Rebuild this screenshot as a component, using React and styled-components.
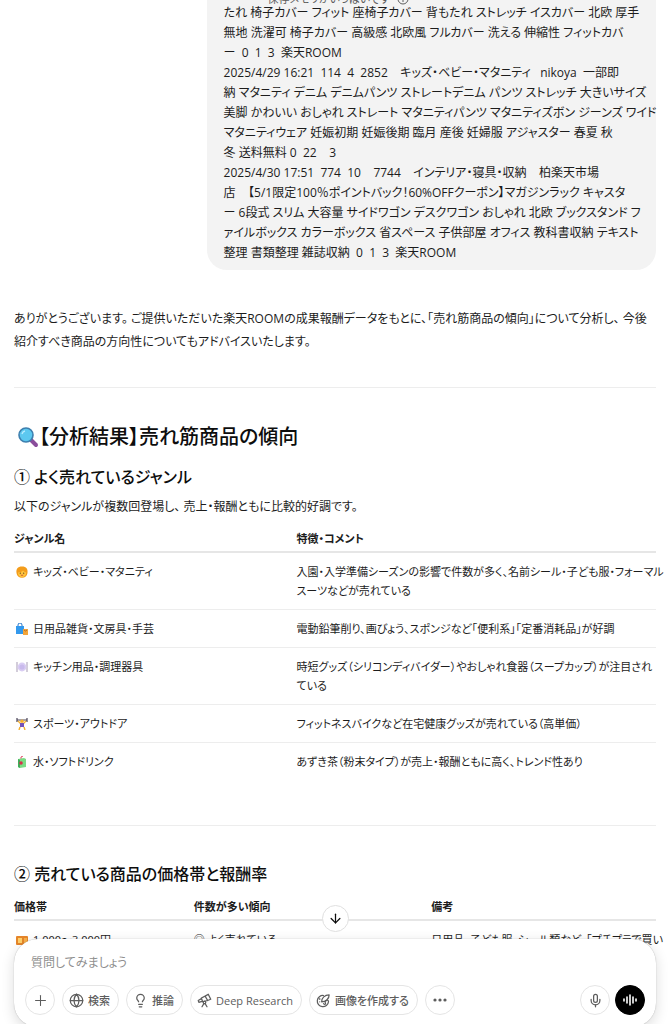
import styled, { createGlobalStyle, css } from "styled-components";
import { ArrowDown, Globe, Lightbulb, Mic, Plus } from "lucide-react";

const GlobalStyle = createGlobalStyle`
  * {
    box-sizing: border-box;
  }

  body {
    margin: 0;
    background: #fff;
    color: #1c1c1c;
    font-family: "Open Sans", "Noto Sans CJK JP", sans-serif;
    font-size: 12px;
    font-feature-settings: "palt";
  }

  button, input {
    font: inherit;
    font-feature-settings: inherit;
  }
`;

const Page = styled.div`
  position: relative;
  height: 100vh;
  overflow: hidden;
`;

const MemoryNotice = styled.div`
  position: absolute;
  top: -10px;
  left: 40%;
  display: flex;
  align-items: center;
  gap: 7px;
  font-size: 11px;
  line-height: 18px;
  color: #5d5d5d;
`;

const Thread = styled.main`
  padding: 0 13px 0 14px;
`;

const Bubble = styled.div`
  width: 70%;
  margin-left: auto;
  padding: 3px 0 7px 17px;
  border-radius: 0 0 20px 20px;
  background: #f3f3f3;
  line-height: 20px;
`;

const Line = styled.div`
  white-space: pre;
`;

const Reply = styled.article`
  padding-top: 37px;
`;

const Paragraph = styled.p`
  margin: 0;
  line-height: 23px;
`;

const Rule = styled.hr`
  margin: 34px 0;
  border: 0;
  border-top: 1px solid #ededed;
`;

const Title = styled.h2`
  display: flex;
  align-items: center;
  margin: 0;
  padding-left: 3px;
  font-size: 20px;
  font-weight: 500;
  line-height: 30px;
  color: #0d0d0d;
`;

const Subtitle = styled.h3`
  margin: 0;
  font-size: 16px;
  font-weight: 500;
  line-height: 28px;
  color: #0d0d0d;

  & + ${Paragraph} {
    margin-top: 4px;
  }
`;

const Table = styled.table`
  width: 100%;
  table-layout: fixed;
  border-collapse: separate;
  border-spacing: 0;
  font-size: 11px;
  line-height: 19px;
`;

const Th = styled.th`
  width: ${({ $width }) => $width};
  padding: 0 0 3px;
  border-bottom: 2px solid #e6e6e6;
  text-align: left;
  font-weight: 700;
`;

const Td = styled.td`
  padding: 9px 0;
  border-bottom: ${({ $last }) => ($last ? "0" : "1px solid #ededed")};
  vertical-align: top;
  white-space: nowrap;
`;

const Label = styled.span`
  display: flex;
  align-items: center;
  gap: 5px;
  padding-left: 2px;
`;

const Section = styled.section`
  padding-top: ${({ $gap }) => $gap};
`;

const Dock = styled.div`
  position: absolute;
  left: 14px;
  right: 13px;
  bottom: -3px;
  display: flex;
  flex-direction: column;
  align-items: center;
  gap: 7px;
`;

const ScrollButton = styled.button`
  display: grid;
  place-items: center;
  width: 27px;
  height: 27px;
  padding: 0;
  border: 1px solid #e0e0e0;
  border-radius: 50%;
  background: #fff;
  color: #0d0d0d;
`;

const Composer = styled.form`
  width: 100%;
  padding: 12px 11px;
  border-radius: 24px;
  background: #fff;
  box-shadow: 0 0 1px rgba(0, 0, 0, 0.35), 0 4px 14px rgba(0, 0, 0, 0.14);
`;

const Prompt = styled.input`
  display: block;
  width: 100%;
  height: 22px;
  margin-bottom: 12px;
  padding: 0 6px;
  border: 0;
  outline: 0;
  background: transparent;

  &::placeholder {
    color: #8f8f8f;
    opacity: 1;
  }
`;

const Actions = styled.div`
  display: flex;
  justify-content: space-between;
`;

const Group = styled.div`
  display: flex;
  gap: ${({ $gap }) => $gap};
`;

const round = css`
  width: 30px;
  padding: 0;
`;

const Pill = styled.button`
  display: flex;
  align-items: center;
  justify-content: center;
  gap: 4px;
  height: 30px;
  padding: 0 8px 0 6px;
  border: 1px solid ${({ $dark }) => ($dark ? "#000" : "#e5e5e5")};
  border-radius: 15px;
  background: ${({ $dark }) => ($dark ? "#000" : "#fff")};
  color: ${({ $dark }) => ($dark ? "#fff" : "#5d5d5d")};
  font-size: 11px;
  font-weight: 500;
  white-space: nowrap;
  ${({ $round }) => $round && round}
`;

const orderLines = [
  "たれ 椅子カバー フィット 座椅子カバー 背もたれ ストレッチ イスカバー 北欧 厚手",
  "無地 洗濯可 椅子カバー 高級感 北欧風 フルカバー 洗える 伸縮性 フィットカバ",
  "ー  0  1  3  楽天ROOM",
  "2025/4/29 16:21  114  4  2852    キッズ・ベビー・マタニティ   nikoya  一部即",
  "納 マタニティ デニム デニムパンツ ストレートデニム パンツ ストレッチ 大きいサイズ",
  "美脚 かわいい おしゃれ ストレート マタニティパンツ マタニティズボン ジーンズ ワイド",
  "マタニティウェア 妊娠初期 妊娠後期 臨月 産後 妊婦服 アジャスター 春夏 秋",
  "冬 送料無料 0  22    3",
  "2025/4/30 17:51  774  10    7744    インテリア・寝具・収納    柏楽天市場",
  "店    【5/1限定100％ポイントバック！60%OFFクーポン】マガジンラック キャスタ",
  "ー 6段式 スリム 大容量 サイドワゴン デスクワゴン おしゃれ 北欧 ブックスタンド フ",
  "ァイルボックス カラーボックス 省スペース 子供部屋 オフィス 教科書収納 テキスト",
  "整理 書類整理 雑誌収納  0  1  3  楽天ROOM",
];

const genres = [
  {
    icon: ChildIcon,
    name: "キッズ・ベビー・マタニティ",
    notes: ["入園・入学準備シーズンの影響で件数が多く、名前シール・子ども服・フォーマル", "スーツなどが売れている"],
  },
  {
    icon: BagsIcon,
    name: "日用品雑貨・文房具・手芸",
    notes: ["電動鉛筆削り、画びょう、スポンジなど「便利系」「定番消耗品」が好調"],
  },
  {
    icon: PlateIcon,
    name: "キッチン用品・調理器具",
    notes: ["時短グッズ（シリコンディバイダー）やおしゃれ食器（スープカップ）が注目され", "ている"],
  },
  {
    icon: LifterIcon,
    name: "スポーツ・アウトドア",
    notes: ["フィットネスバイクなど在宅健康グッズが売れている（高単価）"],
  },
  {
    icon: DrinkIcon,
    name: "水・ソフトドリンク",
    notes: ["あずき茶（粉末タイプ）が売上・報酬ともに高く、トレンド性あり"],
  },
];

function MagnifierIcon() {
  return (
    <svg width="22" height="22" viewBox="0 0 22 22" aria-hidden="true">
      <path d="M14 14l5 5" stroke="#8a4d9b" strokeWidth="4" strokeLinecap="round" />
      <circle cx="9" cy="9" r="7" fill="#5cc8f0" stroke="#3d7fae" strokeWidth="1.6" />
      <path d="M5 8a4 4 0 0 1 3-3" stroke="#b5ebff" strokeWidth="1.4" fill="none" />
    </svg>
  );
}

function ChildIcon() {
  return (
    <svg width="12" height="12" viewBox="0 0 12 12" aria-hidden="true">
      <path d="M.5 7C0 3 1.5.5 6 .5S12 3 11.500 7c-.3 3-2.500 4.800-5.500 4.800S.8 10 .5 7z" fill="#f39c1b" />
      <path d="M2 6.500c2 0 4-.8 5-2 1 1.200 2 1.700 3.200 1.800C10.300 9.500 8.500 11 6 11S2 9.500 2 6.500z" fill="#ffc53d" />
      <circle cx="4.300" cy="7.200" r=".6" fill="#5b3a1c" />
      <circle cx="7.700" cy="7.200" r=".6" fill="#5b3a1c" />
      <path d="M4.800 9q1.200 .9 2.400 0" stroke="#c2462e" strokeWidth=".8" fill="none" />
    </svg>
  );
}

function BagsIcon() {
  return (
    <svg width="12" height="12" viewBox="0 0 12 12" aria-hidden="true">
      <path d="M2 4V2a2 2 0 0 1 4 0v2" stroke="#2877c9" fill="none" />
      <path d="M0 3h8v8H0z" fill="#3399ed" />
      <path d="M7 6h5v6H7z" fill="#f3a53a" />
      <path d="M8 7q1.500 2 3 0" stroke="#a8601b" strokeWidth=".8" fill="none" />
    </svg>
  );
}

function PlateIcon() {
  return (
    <svg width="12" height="12" viewBox="0 0 12 12" aria-hidden="true">
      <path d="M1 1v10M11 1v10" stroke="#a79bb5" />
      <circle cx="6" cy="6" r="4.400" fill="#d9cdf3" />
      <circle cx="6" cy="6" r="2.600" fill="#c9baec" />
    </svg>
  );
}

function LifterIcon() {
  return (
    <svg width="12" height="12" viewBox="0 0 12 12" aria-hidden="true">
      <path d="M1 2h10M1 0v4M11 0v4" stroke="#4a4458" strokeWidth="1.2" />
      <path d="M2 3l3 3M10 3L7 6" stroke="#f5b02d" strokeWidth="1.4" />
      <circle cx="6" cy="3.200" r="1.700" fill="#f5b02d" />
      <path d="M4 5h4v4H4z" fill="#7452b8" />
      <path d="M4 9l-1 3M8 9l1 3" stroke="#f5b02d" strokeWidth="1.4" />
    </svg>
  );
}

function DrinkIcon() {
  return (
    <svg width="12" height="12" viewBox="0 0 12 12" aria-hidden="true">
      <path d="M5 3V1l2-1" stroke="#e0455f" fill="none" />
      <path d="M2 3l6-1 2 1v8l-6 1-2-1z" fill="#7bdc84" />
      <path d="M2 3l2 1v8l-2-1z" fill="#3fae5a" />
      <circle cx="5" cy="7" r="1.800" fill="#d92e4b" />
    </svg>
  );
}

function YenIcon() {
  return (
    <svg width="12" height="12" viewBox="0 0 12 12" aria-hidden="true">
      <rect y="2" width="12" height="9" rx="1" fill="#e6862a" />
      <rect x="2" y="4" width="4" height="5" fill="#ffd16b" />
      <rect x="8" y="4" width="3" height="5" fill="#f7b04a" />
    </svg>
  );
}

function TelescopeIcon() {
  return (
    <svg width="15" height="15" viewBox="0 0 24 24" fill="none" stroke="currentColor" strokeWidth="2" strokeLinecap="round" strokeLinejoin="round" aria-hidden="true">
      <path d="M13 5l5-3 4 8-5 2zM13 5L7 8l2 6 8-2M7 9l-5 3 1 3 6-2" />
      <circle cx="12" cy="15" r="2" />
      <path d="M11 17l-3 5M13 17l3 5" />
    </svg>
  );
}

function PaintIcon() {
  return (
    <svg width="15" height="15" viewBox="0 0 24 24" fill="none" stroke="currentColor" strokeWidth="2" strokeLinecap="round" strokeLinejoin="round" aria-hidden="true">
      <path d="M12 4a9 9 0 1 0 8 10c0-2-1-3-3-2-2 0-3 2-2 4s-1 3-3 1" />
      <path d="M9 14C9 8 14 3 21 3c0 6-5 11-12 11z" />
      <path d="M6 9v1M6 14v0" />
    </svg>
  );
}

function DotsIcon() {
  return (
    <svg width="14" height="14" viewBox="0 0 14 14" fill="currentColor" aria-hidden="true">
      <circle cx="2" cy="7" r="1.600" />
      <circle cx="7" cy="7" r="1.600" />
      <circle cx="12" cy="7" r="1.600" />
    </svg>
  );
}

function VoiceIcon() {
  return (
    <svg width="14" height="14" viewBox="0 0 14 14" stroke="currentColor" strokeWidth="1.6" strokeLinecap="round" aria-hidden="true">
      <path d="M1 6v2M4 4v6M7 2v10M10 4v6M13 6v2" />
    </svg>
  );
}

function InfoIcon() {
  return (
    <svg width="12" height="12" viewBox="0 0 12 12" fill="none" stroke="currentColor" aria-hidden="true">
      <circle cx="6" cy="6" r="5" />
      <path d="M6 5v4M6 3v1" />
    </svg>
  );
}

function GenreTable() {
  return (
    <Table>
      <thead>
        <tr>
          <Th $width="44%">ジャンル名</Th>
          <Th>特徴・コメント</Th>
        </tr>
      </thead>
      <tbody>
        {genres.map(({ icon: Icon, name, notes }, i) => (
          <tr key={name}>
            <Td $last={i === genres.length - 1}>
              <Label>
                <Icon />
                {name}
              </Label>
            </Td>
            <Td $last={i === genres.length - 1}>
              {notes.map((note) => (
                <Line key={note}>{note}</Line>
              ))}
            </Td>
          </tr>
        ))}
      </tbody>
    </Table>
  );
}

function PriceTable() {
  return (
    <Table>
      <thead>
        <tr>
          <Th $width="28%">価格帯</Th>
          <Th $width="37%">件数が多い傾向</Th>
          <Th>備考</Th>
        </tr>
      </thead>
      <tbody>
        <tr>
          <Td $last>
            <Label>
              <YenIcon />
              1,000〜3,000円
            </Label>
          </Td>
          <Td $last>◎ よく売れている</Td>
          <Td $last>日用品、子ども服、シール類など、「プチプラで買い</Td>
        </tr>
      </tbody>
    </Table>
  );
}

export default function App() {
  return (
    <Page>
      <GlobalStyle />
      <Thread>
        <Bubble>
          {orderLines.map((line) => (
            <Line key={line}>{line}</Line>
          ))}
        </Bubble>
        <Reply>
          <Paragraph>
            <Line as="span">ありがとうございます。 ご提供いただいた楽天ROOMの成果報酬データをもとに、「売れ筋商品の傾向」について分析し、 今後</Line>
            <br />
            紹介すべき商品の方向性についてもアドバイスいたします。
          </Paragraph>
          <Rule />
          <Title>
            <MagnifierIcon />
            【分析結果】売れ筋商品の傾向
          </Title>
          <Section $gap="11px">
            <Subtitle>① よく売れているジャンル</Subtitle>
            <Paragraph>以下のジャンルが複数回登場し、 売上・報酬ともに比較的好調です。</Paragraph>
          </Section>
          <Section $gap="11px">
            <GenreTable />
          </Section>
          <Section $gap="11px">
            <Rule />
            <Subtitle>② 売れている商品の価格帯と報酬率</Subtitle>
            <Section $gap="9px">
              <PriceTable />
            </Section>
          </Section>
        </Reply>
      </Thread>
      <MemoryNotice>
        保存メモリがいっぱいです
        <InfoIcon />
      </MemoryNotice>
      <Dock>
        <ScrollButton type="button" aria-label="一番下へ">
          <ArrowDown size={15} />
        </ScrollButton>
        <Composer>
          <Prompt aria-label="質問" placeholder="質問してみましょう" />
          <Actions>
            <Group $gap="7px">
              <Pill type="button" $round aria-label="追加">
                <Plus size={17} strokeWidth={1.5} />
              </Pill>
              <Pill type="button">
                <Globe size={15} />
                検索
              </Pill>
              <Pill type="button">
                <Lightbulb size={15} />
                推論
              </Pill>
              <Pill type="button">
                <TelescopeIcon />
                Deep Research
              </Pill>
              <Pill type="button">
                <PaintIcon />
                画像を作成する
              </Pill>
              <Pill type="button" $round aria-label="その他">
                <DotsIcon />
              </Pill>
            </Group>
            <Group $gap="5px">
              <Pill type="button" $round aria-label="音声入力">
                <Mic size={15} />
              </Pill>
              <Pill type="button" $round $dark aria-label="音声モード">
                <VoiceIcon />
              </Pill>
            </Group>
          </Actions>
        </Composer>
      </Dock>
    </Page>
  );
}
